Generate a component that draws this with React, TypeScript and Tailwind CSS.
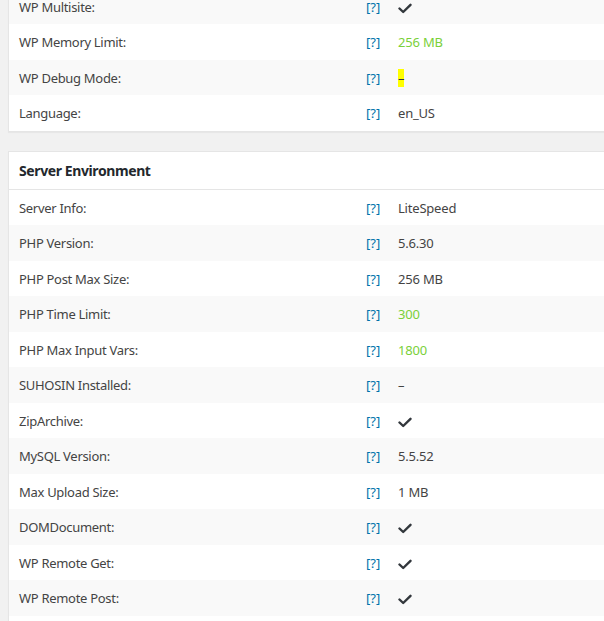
import type { ReactNode } from "react";

type Row = {
  label: string;
  value: ReactNode;
};

function Check() {
  return (
    <svg width="14" height="11" viewBox="0 0 14 11" className="inline-block align-middle">
      <path d="M1.5 5.5 L5.2 9 L12.5 1.8" fill="none" stroke="#32373c" strokeWidth="2.4" strokeLinecap="round" strokeLinejoin="round" />
    </svg>
  );
}

const green = (v: string) => <span className="text-[#7ad03a]">{v}</span>;

const wpRows: Row[] = [
  { label: "WP Multisite:", value: <Check /> },
  { label: "WP Memory Limit:", value: green("256 MB") },
  { label: "WP Debug Mode:", value: <mark className="bg-[#ffff00] text-[#32373c]">–</mark> },
  { label: "Language:", value: "en_US" },
];

const serverRows: Row[] = [
  { label: "Server Info:", value: "LiteSpeed" },
  { label: "PHP Version:", value: "5.6.30" },
  { label: "PHP Post Max Size:", value: "256 MB" },
  { label: "PHP Time Limit:", value: green("300") },
  { label: "PHP Max Input Vars:", value: green("1800") },
  { label: "SUHOSIN Installed:", value: "–" },
  { label: "ZipArchive:", value: <Check /> },
  { label: "MySQL Version:", value: "5.5.52" },
  { label: "Max Upload Size:", value: "1 MB" },
  { label: "DOMDocument:", value: <Check /> },
  { label: "WP Remote Get:", value: <Check /> },
  { label: "WP Remote Post:", value: <Check /> },
];

function StatusRow({ row, striped }: { row: Row; striped: boolean }) {
  return (
    <div className={`flex h-[35.5px] items-center pt-[2px] ${striped ? "bg-[#f9f9f9]" : "bg-white"}`}>
      <div className="w-[347px] shrink-0 px-[10px] tracking-[-0.3px]">{row.label}</div>
      <div className="w-[32px] shrink-0 px-[10px] text-[#0073aa]">[?]</div>
      <div className="px-[10px] tracking-[-0.2px]">{row.value}</div>
    </div>
  );
}

export default function App() {
  return (
    <div
      className="h-[621px] w-[604px] overflow-hidden bg-[#f1f1f1] text-[13px] leading-[19.5px] text-[#444]"
      style={{ fontFamily: '"Noto Sans", "Open Sans", sans-serif' }}
    >
      <div className="ml-[8px] w-[640px]">
        <div className="-mt-[11.5px] border border-t-0 border-[#e5e5e5] bg-white shadow-[0_1px_1px_rgba(0,0,0,0.04)]">
          {wpRows.map((row, i) => (
            <StatusRow key={row.label} row={row} striped={i % 2 === 0} />
          ))}
        </div>

        {/* panel continues past the bottom of the viewport */}
        <div className="mt-[19px] border border-[#e5e5e5] bg-white pb-[20px] shadow-[0_1px_1px_rgba(0,0,0,0.04)]">
          <div className="flex h-[38px] items-center border-b border-[#e5e5e5] px-[10px] pt-[2px] text-[14px] font-bold tracking-[-0.4px] text-[#23282d]">
            Server Environment
          </div>
          {serverRows.map((row, i) => (
            <StatusRow key={row.label} row={row} striped={i % 2 === 1} />
          ))}
        </div>
      </div>
    </div>
  );
}
